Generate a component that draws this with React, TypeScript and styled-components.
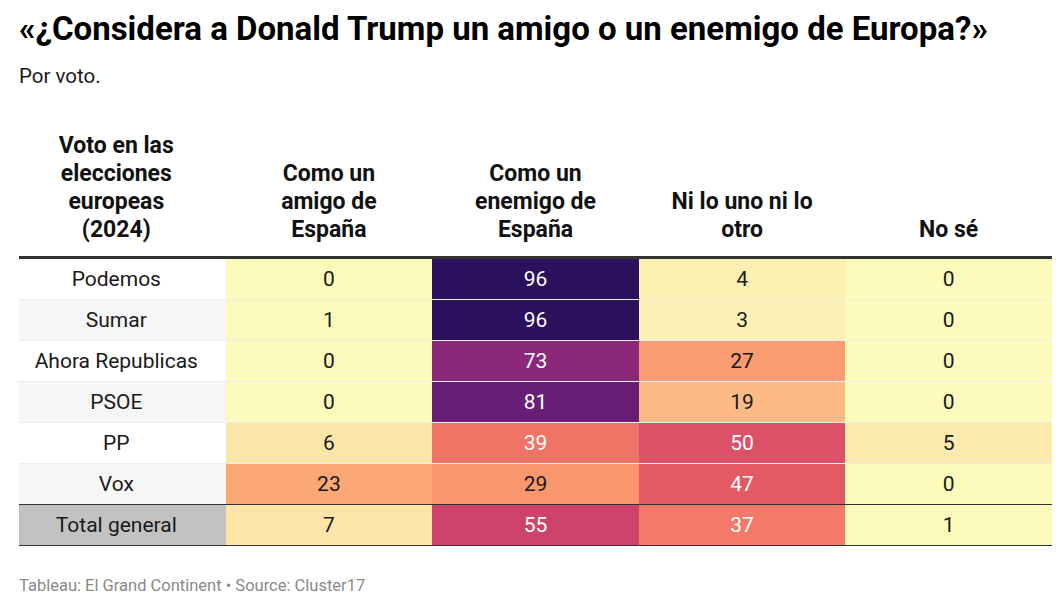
import styled, { createGlobalStyle } from "styled-components";

const GlobalStyle = createGlobalStyle`
  html, body {
    margin: 0;
    padding: 0;
    background: #fff;
  }
  body {
    font-family: Roboto, "Liberation Sans", Arial, sans-serif;
    color: #1a1a1a;
  }
`;

const Page = styled.div`
  width: 1063px;
  padding: 10px 11px 0 19px;
  box-sizing: border-box;
`;

const Title = styled.h1`
  margin: 0;
  font-size: 33px;
  line-height: 38px;
  font-weight: 700;
  color: #000;
`;

const Subtitle = styled.p`
  margin: 15px 0 0;
  font-size: 20.5px;
  line-height: 26px;
  color: #1a1a1a;
`;

const Table = styled.div`
  margin-top: 43px;
  width: 1033px;
`;

const HeadRow = styled.div`
  display: grid;
  grid-template-columns: repeat(5, 1fr);
  align-items: end;
  padding-bottom: 12px;
  border-bottom: 3px solid #333;
`;

const HeadCell = styled.div<{ $first?: boolean }>`
  text-align: center;
  font-weight: 700;
  font-size: 23px;
  line-height: 28px;
  color: #111;
  padding: ${(p) => (p.$first ? "0 40px 0 28px" : "0 28px")};
`;

const Row = styled.div<{ $total?: boolean; $last?: boolean }>`
  display: grid;
  grid-template-columns: repeat(5, 1fr);
  box-sizing: border-box;
  border-bottom: ${(p) =>
    p.$total ? "1px solid #333" : p.$last ? "none" : "1px solid rgba(0,0,0,0.07)"};
  border-top: ${(p) => (p.$total ? "1px solid #333" : "none")};
  height: ${(p) => (p.$total ? "42px" : p.$last ? "40px" : "41px")};
`;

const LabelCell = styled.div<{ $bg: string }>`
  display: flex;
  align-items: center;
  justify-content: center;
  padding-right: 12px;
  font-size: 21px;
  background: ${(p) => p.$bg};
  color: #1a1a1a;
`;

const ValueCell = styled.div<{ $bg: string; $light: boolean }>`
  display: flex;
  align-items: center;
  justify-content: center;
  font-size: 21px;
  background: ${(p) => p.$bg};
  color: ${(p) => (p.$light ? "#fff" : "#1a1a1a")};
`;

const Footer = styled.p`
  margin: 30px 0 0;
  font-size: 16.5px;
  line-height: 20px;
  color: #8a8a8a;
`;

const palette: Record<number, string> = {
  0: "#fcfbbc",
  1: "#fcfabb",
  3: "#fcf0b4",
  4: "#fcefb2",
  5: "#fce9ad",
  6: "#fbe6aa",
  7: "#fde5a8",
  19: "#fdba87",
  23: "#fca876",
  27: "#fa9c71",
  29: "#fa966d",
  37: "#f37a68",
  39: "#f07465",
  47: "#e45a64",
  50: "#dc5068",
  55: "#cc446c",
  73: "#8b2879",
  81: "#681e75",
  96: "#2c115f",
};

const rows: { label: string; values: number[] }[] = [
  { label: "Podemos", values: [0, 96, 4, 0] },
  { label: "Sumar", values: [1, 96, 3, 0] },
  { label: "Ahora Republicas", values: [0, 73, 27, 0] },
  { label: "PSOE", values: [0, 81, 19, 0] },
  { label: "PP", values: [6, 39, 50, 5] },
  { label: "Vox", values: [23, 29, 47, 0] },
];

const total = { label: "Total general", values: [7, 55, 37, 1] };

export default function App() {
  return (
    <Page>
      <GlobalStyle />
      <Title>«¿Considera a Donald Trump un amigo o un enemigo de Europa?»</Title>
      <Subtitle>Por voto.</Subtitle>
      <Table>
        <HeadRow>
          <HeadCell $first>Voto en las elecciones europeas (2024)</HeadCell>
          <HeadCell>Como un amigo de España</HeadCell>
          <HeadCell>Como un enemigo de España</HeadCell>
          <HeadCell>Ni lo uno ni lo otro</HeadCell>
          <HeadCell>No sé</HeadCell>
        </HeadRow>
        {rows.map((r, i) => (
          <Row key={r.label} $last={i === rows.length - 1}>
            <LabelCell $bg={i % 2 === 0 ? "#ffffff" : "#f6f6f6"}>{r.label}</LabelCell>
            {r.values.map((v, j) => (
              <ValueCell key={j} $bg={palette[v]} $light={v >= 35}>
                {v}
              </ValueCell>
            ))}
          </Row>
        ))}
        <Row $total>
          <LabelCell $bg="#c2c2c2">{total.label}</LabelCell>
          {total.values.map((v, j) => (
            <ValueCell key={j} $bg={palette[v]} $light={v >= 35}>
              {v}
            </ValueCell>
          ))}
        </Row>
      </Table>
      <Footer>Tableau: El Grand Continent • Source: Cluster17</Footer>
    </Page>
  );
}
